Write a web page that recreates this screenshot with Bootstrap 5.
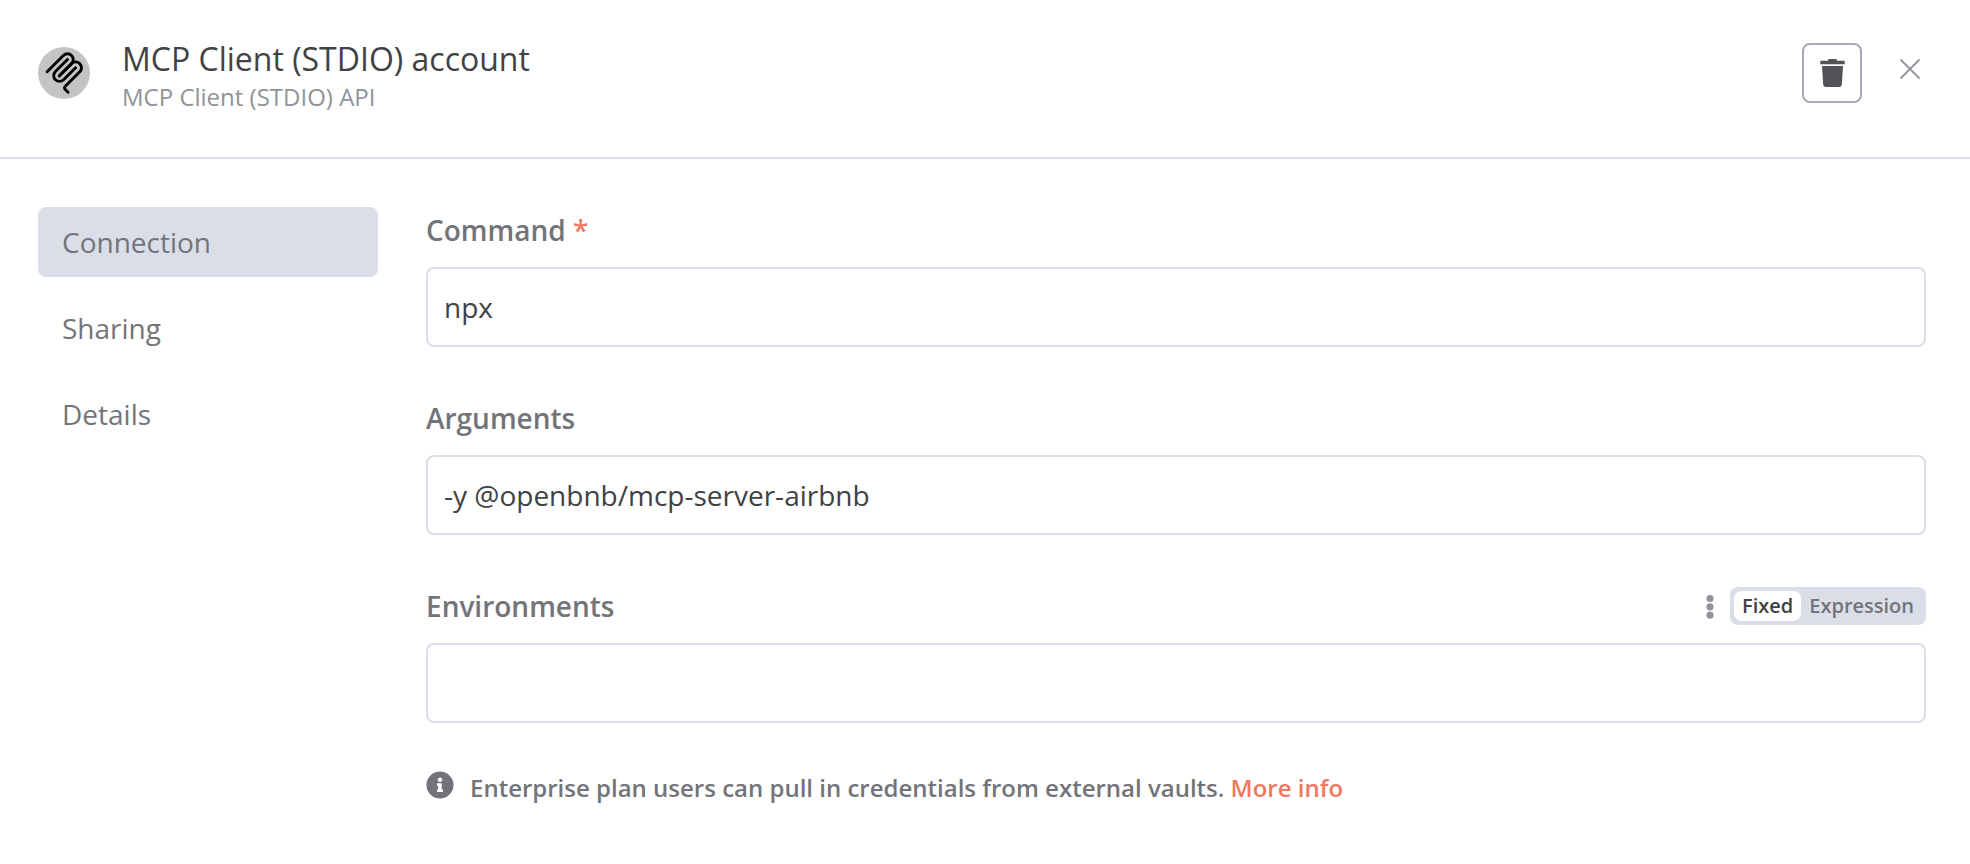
<!DOCTYPE html>
<html lang="en">
<head>
<meta charset="utf-8">
<meta name="viewport" content="width=device-width, initial-scale=1">
<title>MCP Client (STDIO) account</title>
<link href="https://cdn.jsdelivr.net/npm/bootstrap@5.3.0/dist/css/bootstrap.min.css" rel="stylesheet">
<style>
  :root {
    --line: #dadee8;
    --ink: #414244;
    --ink-base: #737479;
    --ink-light: #909399;
    --brand: #f0785f;
  }
  body { font-family: "Open Sans", sans-serif; font-size: 28px; line-height: 38px; color: var(--ink-base); background: #fff; }
  .modal-top { padding: 37px 44px 44px 38px; border-bottom: 2px solid var(--line); }
  .app-logo { width: 52px; height: 52px; margin-top: 10px; }
  .titles { margin-left: 32px; }
  .titles h1 { font-size: 32px; line-height: 44px; font-weight: 400; color: var(--ink); }
  .titles p { font-size: 24px; line-height: 32px; color: var(--ink-light); }
  .btn-trash { width: 60px; height: 60px; margin-top: 6px; border: 2px solid #a5aab8; border-radius: 8px; color: #525356; }
  .btn-x { width: 32px; height: 32px; margin: 16px 0 0 32px; color: var(--ink-light); }
  .modal-main { padding: 48px 44px 48px 38px; gap: 48px; }
  .side-menu { width: 340px; gap: 16px; }
  .side-menu .nav-link { padding: 16px 24px; border-radius: 8px; color: var(--ink-base); }
  .side-menu .nav-link.active { background: var(--line); color: var(--ink-base); }
  .fields { gap: 52px; padding-top: 4px; }
  .field-head { height: 38px; margin-bottom: 18px; }
  .field-head .form-label { font-weight: 600; }
  .field-box { height: 80px; padding: 0 16px; border: 2px solid var(--line); border-radius: 8px; font-size: 28px; color: var(--ink); }
  .star { color: var(--brand); }
  .btn-dots { width: 16px; height: 32px; margin-right: 12px; color: var(--ink-light); }
  .mode-switch { padding: 4px; border-radius: 8px; background: var(--line); }
  .mode-switch label { padding: 0 8px; border-radius: 8px; font-size: 20px; line-height: 30px; font-weight: 600; color: var(--ink-base); cursor: pointer; }
  .mode-switch .btn-check:checked + label { background: #fff; color: var(--ink); }
  .notice { font-size: 24px; line-height: 34px; font-weight: 600; gap: 16px; }
  .notice a { color: var(--brand); }
</style>
</head>
<body>
<header class="modal-top d-flex align-items-start">
  <svg class="app-logo flex-shrink-0" viewBox="0 0 52 52" aria-hidden="true">
    <circle cx="26" cy="26" r="26" fill="#c4c4c4"/>
    <g transform="translate(4.800 4.400) scale(.24)" fill="none" stroke="#000" stroke-width="12" stroke-linecap="round">
      <path d="M18 84.853L85.882 16.971C95.255 7.598 110.451 7.598 119.823 16.971C129.196 26.343 129.196 41.539 119.823 50.912L68.558 102.177"/>
      <path d="M69.265 101.470L119.823 50.912C129.196 41.539 144.392 41.539 153.765 50.912L154.118 51.265C163.491 60.638 163.491 75.834 154.118 85.206L92.725 146.600C89.601 149.724 89.601 154.789 92.725 157.913L105.331 170.520"/>
      <path d="M102.853 33.941L52.648 84.146C43.276 93.518 43.276 108.714 52.648 118.087C62.021 127.459 77.217 127.459 86.589 118.087L136.794 67.882"/>
    </g>
  </svg>
  <div class="titles flex-grow-1">
    <h1 class="m-0">MCP Client (STDIO) account</h1>
    <p class="m-0">MCP Client (STDIO) API</p>
  </div>
  <button type="button" class="btn btn-trash p-0 d-flex align-items-center justify-content-center" aria-label="Delete">
    <svg width="25" height="28" viewBox="0 0 448 512" fill="currentColor" aria-hidden="true"><path d="M432 32H312l-9.400-18.700A24 24 0 0 0 281.100 0H166.800a23.720 23.720 0 0 0-21.400 13.300L136 32H16A16 16 0 0 0 0 48v32a16 16 0 0 0 16 16h416a16 16 0 0 0 16-16V48a16 16 0 0 0-16-16zM53.200 467a48 48 0 0 0 47.900 45h245.800a48 48 0 0 0 47.900-45L416 128H32z"/></svg>
  </button>
  <button type="button" class="btn btn-x border-0 p-0 d-flex align-items-center justify-content-center" aria-label="Close">
    <svg width="20" height="20" viewBox="0 0 20 20" fill="none" stroke="currentColor" stroke-width="1.800" stroke-linecap="round" aria-hidden="true"><path d="M1 1l18 18M19 1L1 19"/></svg>
  </button>
</header>
<main class="modal-main d-flex align-items-start">
  <nav class="side-menu nav nav-pills flex-column flex-shrink-0">
    <a class="nav-link active" aria-current="page" href="#connection">Connection</a>
    <a class="nav-link" href="#sharing">Sharing</a>
    <a class="nav-link" href="#details">Details</a>
  </nav>
  <form class="flex-grow-1" id="connection">
    <div class="fields d-flex flex-column">
      <div>
        <div class="field-head d-flex align-items-center">
          <label class="form-label m-0" for="command">Command <span class="star">*</span></label>
        </div>
        <input class="form-control field-box" type="text" id="command" value="npx">
      </div>
      <div>
        <div class="field-head d-flex align-items-center">
          <label class="form-label m-0" for="arguments">Arguments</label>
        </div>
        <input class="form-control field-box" type="text" id="arguments" value="-y @openbnb/mcp-server-airbnb">
      </div>
      <div>
        <div class="field-head d-flex align-items-center">
          <label class="form-label m-0 me-auto" for="environments">Environments</label>
          <button type="button" class="btn btn-dots border-0 p-0 d-flex align-items-center justify-content-center" aria-label="Options">
            <svg width="8" height="26" viewBox="0 0 8 26" fill="currentColor" aria-hidden="true"><circle cx="4" cy="5.500" r="3.600"/><circle cx="4" cy="13.800" r="3.600"/><circle cx="4" cy="22.100" r="3.600"/></svg>
          </button>
          <div class="mode-switch d-flex" role="radiogroup" aria-label="Value type">
            <input class="btn-check" type="radio" name="mode" id="mode-fixed" checked>
            <label for="mode-fixed">Fixed</label>
            <input class="btn-check" type="radio" name="mode" id="mode-expression">
            <label for="mode-expression">Expression</label>
          </div>
        </div>
        <input class="form-control field-box" type="text" id="environments">
      </div>
    </div>
    <div class="notice d-flex mt-5">
      <svg class="flex-shrink-0" width="28" height="28" viewBox="0 0 512 512" fill="currentColor" aria-hidden="true"><path d="M256 8C119.043 8 8 119.083 8 256c0 136.997 111.043 248 248 248s248-111.003 248-248C504 119.083 392.957 8 256 8zm0 110c23.196 0 42 18.804 42 42s-18.804 42-42 42-42-18.804-42-42 18.804-42 42-42zm56 254c0 6.627-5.373 12-12 12h-88c-6.627 0-12-5.373-12-12v-24c0-6.627 5.373-12 12-12h12v-64h-12c-6.627 0-12-5.373-12-12v-24c0-6.627 5.373-12 12-12h64c6.627 0 12 5.373 12 12v100h12c6.627 0 12 5.373 12 12v24z"/></svg>
      <span>Enterprise plan users can pull in credentials from external vaults. <a class="text-decoration-none" href="#more-info">More info</a></span>
    </div>
  </form>
</main>
<script src="https://cdn.jsdelivr.net/npm/bootstrap@5.3.0/dist/js/bootstrap.bundle.min.js"></script>
</body>
</html>
